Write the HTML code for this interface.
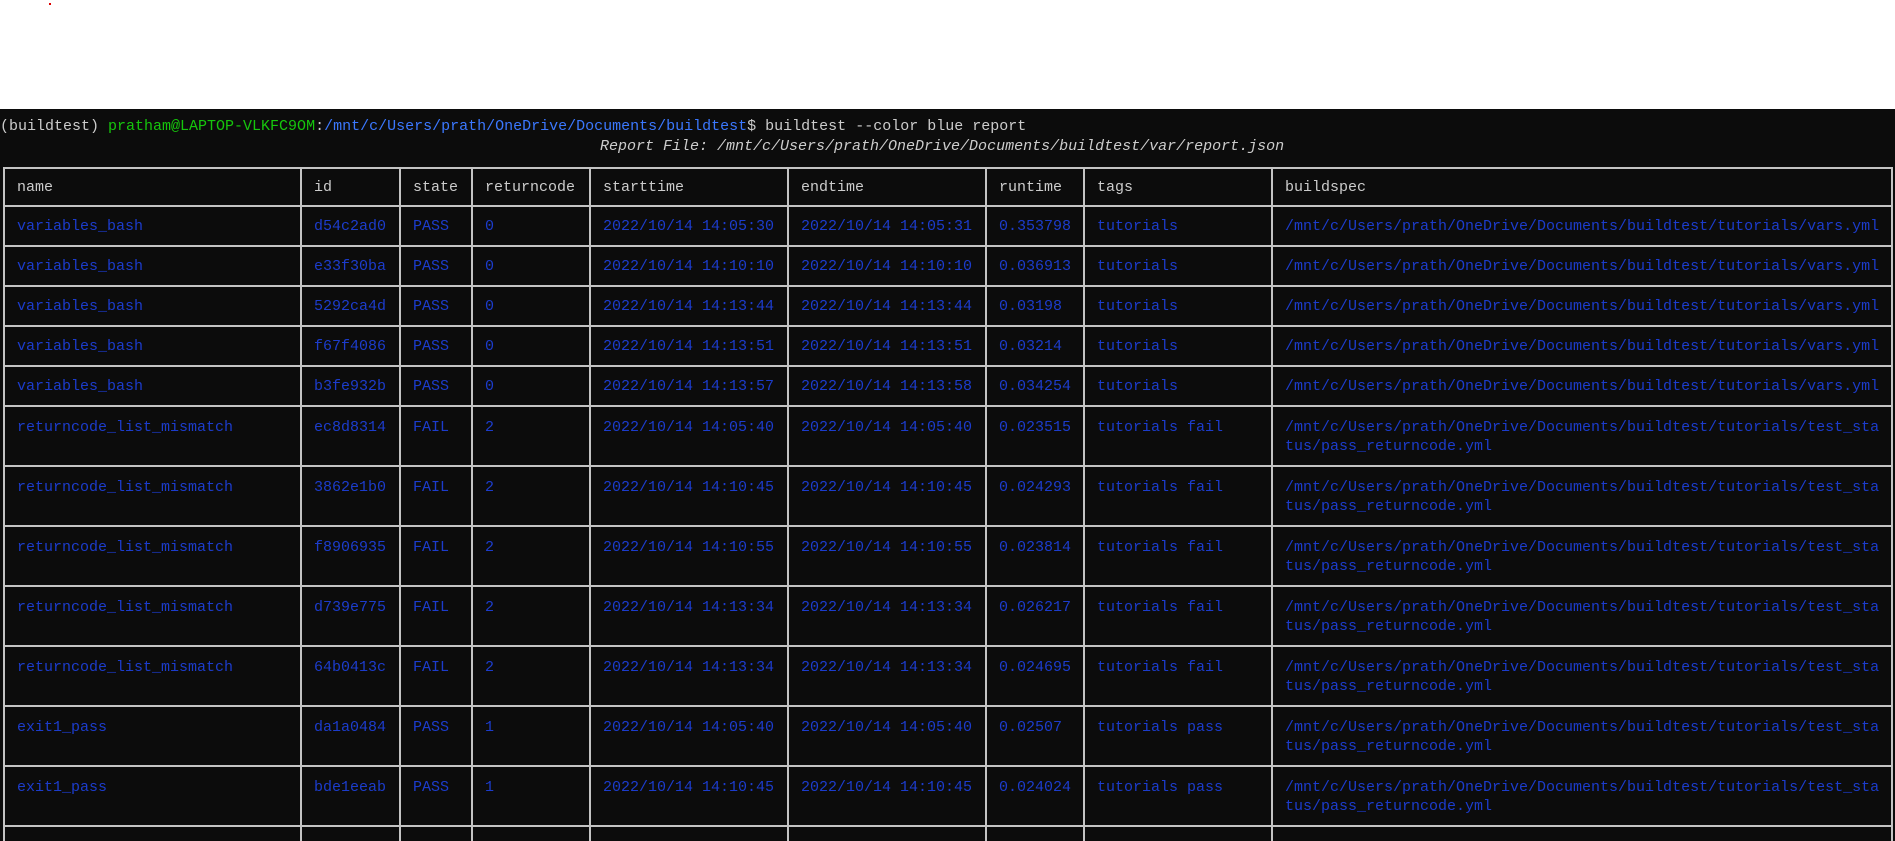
<!DOCTYPE html>
<html><head><meta charset="utf-8"><style>
html,body{margin:0;padding:0;width:1895px;height:841px;overflow:hidden;background:#fff;font-family:"Liberation Mono",monospace;}
#wrap{position:relative;width:1895px;height:841px;overflow:hidden;}
#term{position:absolute;left:0;top:109px;width:1895px;height:732px;background:#0c0c0c;}
.line{position:absolute;white-space:pre;font-size:15px;color:#cccccc;line-height:19px;}
table{position:absolute;left:3px;top:167px;border-collapse:collapse;table-layout:fixed;font-size:15px;}
td{border:2px solid #c4c4c4;padding:0 0 0 12px;color:#1c3ccc;white-space:pre;overflow:hidden;line-height:19px;vertical-align:middle;}
tr.h td{color:#cccccc;height:36px;}
tr.s td{height:38px;}
tr.d td{height:60px;vertical-align:top;padding-top:11px;box-sizing:border-box;}
tr.e td{height:30px;border-bottom:none;}
</style></head><body><div id="wrap">
<div style="position:absolute;left:49px;top:3px;width:2px;height:2px;background:#d00;"></div>
<div id="term"></div>
<div class="line" style="left:0;top:117px;">(buildtest) <span style="color:#16c60c">pratham@LAPTOP-VLKFC9OM</span>:<span style="color:#3b78ff">/mnt/c/Users/prath/OneDrive/Documents/buildtest</span>$ buildtest --color blue report</div>
<div class="line" style="left:600px;top:137px;font-style:italic;">Report File: /mnt/c/Users/prath/OneDrive/Documents/buildtest/var/report.json</div>
<table>
<colgroup><col style="width:297px"><col style="width:99px"><col style="width:72px"><col style="width:118px"><col style="width:198px"><col style="width:198px"><col style="width:98px"><col style="width:188px"><col style="width:620px"></colgroup>
<tr class="h"><td>name</td><td>id</td><td>state</td><td>returncode</td><td>starttime</td><td>endtime</td><td>runtime</td><td>tags</td><td>buildspec</td></tr>
<tr class="s"><td>variables_bash</td><td>d54c2ad0</td><td>PASS</td><td>0</td><td>2022/10/14 14:05:30</td><td>2022/10/14 14:05:31</td><td>0.353798</td><td>tutorials</td><td>/mnt/c/Users/prath/OneDrive/Documents/buildtest/tutorials/vars.yml</td></tr>
<tr class="s"><td>variables_bash</td><td>e33f30ba</td><td>PASS</td><td>0</td><td>2022/10/14 14:10:10</td><td>2022/10/14 14:10:10</td><td>0.036913</td><td>tutorials</td><td>/mnt/c/Users/prath/OneDrive/Documents/buildtest/tutorials/vars.yml</td></tr>
<tr class="s"><td>variables_bash</td><td>5292ca4d</td><td>PASS</td><td>0</td><td>2022/10/14 14:13:44</td><td>2022/10/14 14:13:44</td><td>0.03198</td><td>tutorials</td><td>/mnt/c/Users/prath/OneDrive/Documents/buildtest/tutorials/vars.yml</td></tr>
<tr class="s"><td>variables_bash</td><td>f67f4086</td><td>PASS</td><td>0</td><td>2022/10/14 14:13:51</td><td>2022/10/14 14:13:51</td><td>0.03214</td><td>tutorials</td><td>/mnt/c/Users/prath/OneDrive/Documents/buildtest/tutorials/vars.yml</td></tr>
<tr class="s"><td>variables_bash</td><td>b3fe932b</td><td>PASS</td><td>0</td><td>2022/10/14 14:13:57</td><td>2022/10/14 14:13:58</td><td>0.034254</td><td>tutorials</td><td>/mnt/c/Users/prath/OneDrive/Documents/buildtest/tutorials/vars.yml</td></tr>
<tr class="d"><td>returncode_list_mismatch</td><td>ec8d8314</td><td>FAIL</td><td>2</td><td>2022/10/14 14:05:40</td><td>2022/10/14 14:05:40</td><td>0.023515</td><td>tutorials fail</td><td>/mnt/c/Users/prath/OneDrive/Documents/buildtest/tutorials/test_sta
tus/pass_returncode.yml</td></tr>
<tr class="d"><td>returncode_list_mismatch</td><td>3862e1b0</td><td>FAIL</td><td>2</td><td>2022/10/14 14:10:45</td><td>2022/10/14 14:10:45</td><td>0.024293</td><td>tutorials fail</td><td>/mnt/c/Users/prath/OneDrive/Documents/buildtest/tutorials/test_sta
tus/pass_returncode.yml</td></tr>
<tr class="d"><td>returncode_list_mismatch</td><td>f8906935</td><td>FAIL</td><td>2</td><td>2022/10/14 14:10:55</td><td>2022/10/14 14:10:55</td><td>0.023814</td><td>tutorials fail</td><td>/mnt/c/Users/prath/OneDrive/Documents/buildtest/tutorials/test_sta
tus/pass_returncode.yml</td></tr>
<tr class="d"><td>returncode_list_mismatch</td><td>d739e775</td><td>FAIL</td><td>2</td><td>2022/10/14 14:13:34</td><td>2022/10/14 14:13:34</td><td>0.026217</td><td>tutorials fail</td><td>/mnt/c/Users/prath/OneDrive/Documents/buildtest/tutorials/test_sta
tus/pass_returncode.yml</td></tr>
<tr class="d"><td>returncode_list_mismatch</td><td>64b0413c</td><td>FAIL</td><td>2</td><td>2022/10/14 14:13:34</td><td>2022/10/14 14:13:34</td><td>0.024695</td><td>tutorials fail</td><td>/mnt/c/Users/prath/OneDrive/Documents/buildtest/tutorials/test_sta
tus/pass_returncode.yml</td></tr>
<tr class="d"><td>exit1_pass</td><td>da1a0484</td><td>PASS</td><td>1</td><td>2022/10/14 14:05:40</td><td>2022/10/14 14:05:40</td><td>0.02507</td><td>tutorials pass</td><td>/mnt/c/Users/prath/OneDrive/Documents/buildtest/tutorials/test_sta
tus/pass_returncode.yml</td></tr>
<tr class="d"><td>exit1_pass</td><td>bde1eeab</td><td>PASS</td><td>1</td><td>2022/10/14 14:10:45</td><td>2022/10/14 14:10:45</td><td>0.024024</td><td>tutorials pass</td><td>/mnt/c/Users/prath/OneDrive/Documents/buildtest/tutorials/test_sta
tus/pass_returncode.yml</td></tr>
<tr class="e"><td> </td><td> </td><td> </td><td> </td><td> </td><td> </td><td> </td><td> </td><td> </td></tr>
</table>
</div></body></html>
